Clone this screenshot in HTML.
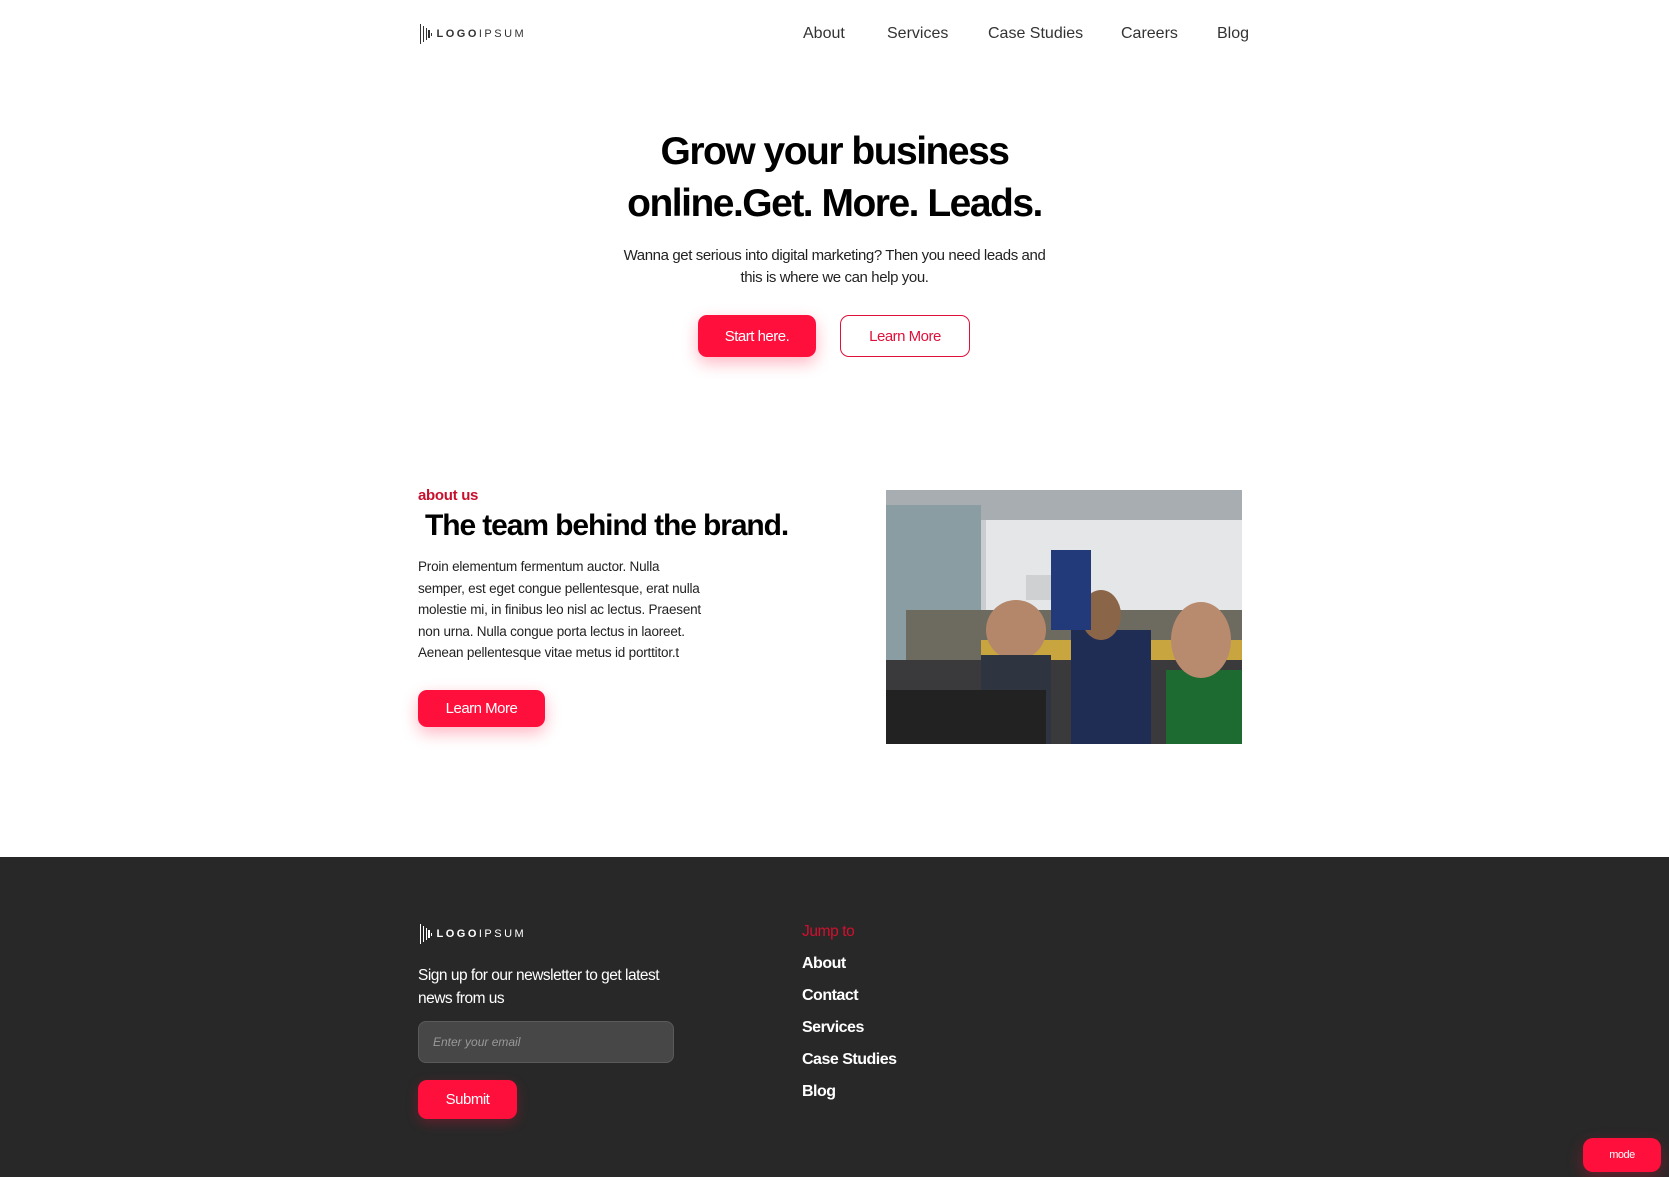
<!DOCTYPE html>
<html><head><meta charset="utf-8"><style>
*{margin:0;padding:0;box-sizing:border-box}
body{width:1669px;height:1177px;overflow:hidden;background:#fff;font-family:"Liberation Sans",sans-serif;color:#111;position:relative}
.a{position:absolute;white-space:nowrap}
.nav{font-size:16px;color:#333;top:25px}
.btn{position:absolute;background:#ff0f3b;color:#fff;border-radius:9px;display:flex;align-items:center;justify-content:center;box-shadow:0 6px 16px rgba(255,15,59,.3);letter-spacing:-.5px}
.logo{position:absolute;display:flex;align-items:center;font-size:11px;letter-spacing:2.5px}
.bars{display:flex;align-items:center;gap:1.5px;margin-right:4px}
.bars i{display:block;width:1.3px;background:currentColor}
</style></head><body>
<div class="logo" style="left:420px;top:24px;color:#333"><span class="bars"><i style="height:20px"></i><i style="height:16px"></i><i style="height:12px"></i><i style="height:8px"></i><i style="height:3px"></i></span><b>LOGO</b>IPSUM</div>
<div class="a nav" style="left:803px">About</div>
<div class="a nav" style="left:887px">Services</div>
<div class="a nav" style="left:988px">Case Studies</div>
<div class="a nav" style="left:1121px">Careers</div>
<div class="a nav" style="left:1217px">Blog</div>
<div class="a" style="left:0;width:1669px;text-align:center;top:126px;font-size:39px;font-weight:bold;line-height:52px;letter-spacing:-1.5px;color:#000">Grow your business<br>online.Get. More. Leads.</div>
<div class="a" style="left:0;width:1669px;text-align:center;top:245px;font-size:15px;line-height:22px;letter-spacing:-.4px;color:#222">Wanna get serious into digital marketing? Then you need leads and<br>this is where we can help you.</div>
<div class="btn" style="left:698px;top:315px;width:118px;height:42px;font-size:15px">Start here.</div>
<div class="a" style="left:840px;top:315px;width:130px;height:42px;border:1px solid #e0103a;border-radius:9px;display:flex;align-items:center;justify-content:center;color:#e0103a;font-size:15px;letter-spacing:-.5px">Learn More</div>
<div class="a" style="left:418px;top:487px;font-size:15px;color:#c8102e;font-weight:bold;letter-spacing:-.3px">about us</div>
<div class="a" style="left:425px;top:509px;font-size:30px;font-weight:bold;letter-spacing:-1.1px;color:#000">The team behind the brand.</div>
<div class="a" style="left:418px;top:556px;font-size:13.5px;line-height:21.6px;color:#222;white-space:normal;width:300px;letter-spacing:-.2px">Proin elementum fermentum auctor. Nulla<br>semper, est eget congue pellentesque, erat nulla<br>molestie mi, in finibus leo nisl ac lectus. Praesent<br>non urna. Nulla congue porta lectus in laoreet.<br>Aenean pellentesque vitae metus id porttitor.t</div>
<div class="btn" style="left:418px;top:690px;width:127px;height:37px;font-size:15px">Learn More</div>
<svg class="a" style="left:886px;top:490px" width="356" height="254" viewBox="0 0 356 254">
<rect width="356" height="254" fill="#c9ccd0"/>
<rect x="0" y="0" width="356" height="30" fill="#a8adb2"/>
<rect x="100" y="30" width="256" height="100" fill="#e4e6e8"/>
<rect x="0" y="15" width="95" height="160" fill="#8a9da3"/>
<rect x="20" y="120" width="336" height="70" fill="#6d6a60"/>
<rect x="95" y="150" width="261" height="40" fill="#c9a540"/>
<rect x="0" y="170" width="356" height="84" fill="#3a3a3c"/>
<ellipse cx="130" cy="140" rx="30" ry="30" fill="#b5876a"/>
<rect x="95" y="165" width="70" height="89" fill="#2f3540"/>
<rect x="185" y="140" width="80" height="114" fill="#1f2d55"/>
<ellipse cx="215" cy="125" rx="20" ry="25" fill="#8a6548"/>
<rect x="280" y="180" width="76" height="74" fill="#1d6b30"/>
<ellipse cx="315" cy="150" rx="30" ry="38" fill="#b98b6e"/>
<rect x="140" y="85" width="35" height="25" fill="#cfd0d2"/>
<rect x="165" y="60" width="40" height="80" fill="#223a7a"/>
<rect x="0" y="200" width="160" height="54" fill="#222"/>
</svg>
<div class="a" style="left:0;top:857px;width:1669px;height:320px;background:#282828"></div>
<div class="logo" style="left:420px;top:924px;color:#fff"><span class="bars"><i style="height:20px"></i><i style="height:16px"></i><i style="height:12px"></i><i style="height:8px"></i><i style="height:3px"></i></span><b>LOGO</b>IPSUM</div>
<div class="a" style="left:418px;top:964px;font-size:15.5px;line-height:23px;color:#fff;letter-spacing:-.5px">Sign up for our newsletter to get latest<br>news from us</div>
<div class="a" style="left:418px;top:1021px;width:256px;height:42px;background:#474747;border:1px solid #5a5a5a;border-radius:8px;color:#999;font-size:12px;font-style:italic;padding:13px 14px">Enter your email</div>
<div class="btn" style="left:418px;top:1080px;width:99px;height:39px;font-size:15px;box-shadow:0 4px 12px rgba(255,15,59,.25)">Submit</div>
<div class="a" style="left:802px;top:923px;font-size:15.5px;color:#d2102f;letter-spacing:-.4px">Jump to</div>
<div class="a" style="left:802px;top:948px;font-size:16px;line-height:32px;color:#fff;font-weight:bold;letter-spacing:-.5px">About<br>Contact<br>Services<br>Case Studies<br>Blog</div>
<div class="btn" style="left:1583px;top:1138px;width:78px;height:34px;font-size:11px;border-radius:10px">mode</div>
</body></html>
